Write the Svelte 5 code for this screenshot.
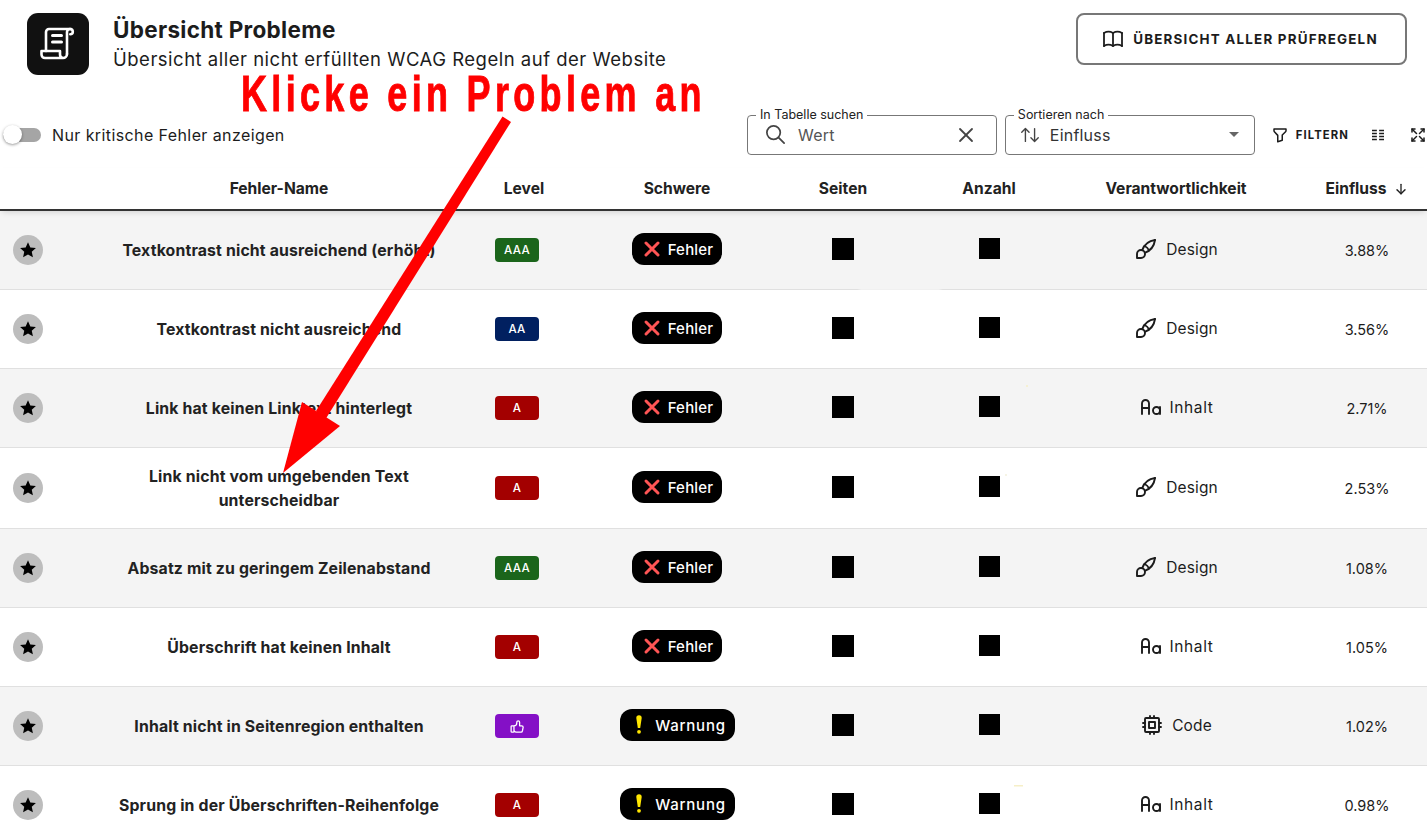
<script>
  const rows = [
    { name: ['Textkontrast nicht ausreichend (erhöht)'], level: 'AAA', sev: 'Fehler', who: 'Design', pct: '3.88%' },
    { name: ['Textkontrast nicht ausreichend'], level: 'AA', sev: 'Fehler', who: 'Design', pct: '3.56%' },
    { name: ['Link hat keinen Linktext hinterlegt'], level: 'A', sev: 'Fehler', who: 'Inhalt', pct: '2.71%' },
    { name: ['Link nicht vom umgebenden Text', 'unterscheidbar'], level: 'A', sev: 'Fehler', who: 'Design', pct: '2.53%' },
    { name: ['Absatz mit zu geringem Zeilenabstand'], level: 'AAA', sev: 'Fehler', who: 'Design', pct: '1.08%' },
    { name: ['Überschrift hat keinen Inhalt'], level: 'A', sev: 'Fehler', who: 'Inhalt', pct: '1.05%' },
    { name: ['Inhalt nicht in Seitenregion enthalten'], level: 'up', sev: 'Warnung', who: 'Code', pct: '1.02%' },
    { name: ['Sprung in der Überschriften-Reihenfolge'], level: 'A', sev: 'Warnung', who: 'Inhalt', pct: '0.98%' }
  ];
  const whoIcons = {
    Design: ['M3 21v-4a4 4 0 1 1 4 4h-4', 'M21 3a16 16 0 0 0 -12.8 10.2', 'M21 3a16 16 0 0 1 -10.2 12.8', 'M10.6 9a9 9 0 0 1 4.4 4.4'],
    Inhalt: ['M17.5 15.5m-3.5 0a3.5 3.5 0 1 0 7 0a3.5 3.5 0 1 0 -7 0', 'M3 19v-10.5a3.5 3.5 0 0 1 7 0v10.5', 'M3 13h7', 'M21 12v7'],
    Code: ['M5 6a1 1 0 0 1 1 -1h12a1 1 0 0 1 1 1v12a1 1 0 0 1 -1 1h-12a1 1 0 0 1 -1 -1z', 'M9 9h6v6h-6z', 'M3 10h2', 'M3 14h2', 'M10 3v2', 'M14 3v2', 'M21 10h-2', 'M21 14h-2', 'M14 21v-2', 'M10 21v-2']
  };
  const levelClass = { AAA: 'aaa', AA: 'aa', A: 'a', up: 'up' };
</script>

<div class="page">
  <header class="top">
    <div class="logo">
      <svg viewBox="0 0 62 62" width="62" height="62" fill="none" stroke="#fff" stroke-width="2.600" stroke-linecap="round" stroke-linejoin="round">
        <path d="M19 38V19a3 3 0 0 1 3-3h22" />
        <path d="M40 41V19a3 3 0 0 1 3-3 2.800 2.800 0 0 1 2.800 2.800 2.500 2.500 0 0 1-2.500 2.500" />
        <path d="M40 41a4 4 0 0 1-4 4H18a3.500 3.500 0 0 1-3.500-3.500V38H33v3.500a3.500 3.500 0 0 0 3 3.500" />
        <path d="M25.500 22.500h9M25.500 29h9" stroke-width="3" />
      </svg>
    </div>
    <div class="heading">
      <h1>Übersicht Probleme</h1>
      <p>Übersicht aller nicht erfüllten WCAG Regeln auf der Website</p>
    </div>
    <button class="rules">
      <svg viewBox="0 0 24 24" width="24" height="24" fill="none" stroke="#1c1c1c" stroke-width="1.800" stroke-linecap="round" stroke-linejoin="round">
        <path d="M3 19a9 9 0 0 1 9 0a9 9 0 0 1 9 0" /><path d="M3 6a9 9 0 0 1 9 0a9 9 0 0 1 9 0" /><path d="M3 6v13" /><path d="M12 6v13" /><path d="M21 6v13" />
      </svg>
      <span>ÜBERSICHT ALLER PRÜFREGELN</span>
    </button>
  </header>

  <div class="toolbar">
    <div class="toggle">
      <span class="track"><span class="thumb"></span></span>
      <span class="toggle-label">Nur kritische Fehler anzeigen</span>
    </div>
    <div class="tools">
      <fieldset class="field search">
        <legend>In Tabelle suchen</legend>
        <svg viewBox="0 0 24 24" width="23" height="23" fill="none" stroke="#444" stroke-width="1.800" stroke-linecap="round" stroke-linejoin="round"><path d="M3 10a7 7 0 1 0 14 0a7 7 0 1 0 -14 0" /><path d="M21 21l-6 -6" /></svg>
        <span class="value muted">Wert</span>
        <svg class="clear" viewBox="0 0 24 24" width="24" height="24" fill="none" stroke="#444" stroke-width="1.800" stroke-linecap="round"><path d="M18 6l-12 12" /><path d="M6 6l12 12" /></svg>
      </fieldset>
      <fieldset class="field sort">
        <legend>Sortieren nach</legend>
        <svg viewBox="0 0 24 24" width="22" height="22" fill="none" stroke="#444" stroke-width="1.500" stroke-linecap="round" stroke-linejoin="round"><path d="M3 9l4 -4l4 4m-4 -4v14" /><path d="M21 15l-4 4l-4 -4m4 4v-14" /></svg>
        <span class="value">Einfluss</span>
        <span class="caret"></span>
      </fieldset>
      <div class="filter">
        <svg viewBox="0 0 24 24" width="18" height="18" fill="none" stroke="#1c1c1c" stroke-width="2" stroke-linecap="round" stroke-linejoin="round"><path d="M4 4h16v2.172a2 2 0 0 1 -.586 1.414l-4.414 4.414v7l-6 2v-8.500l-4.480 -4.928a2 2 0 0 1 -.520 -1.345v-2.227z" /></svg>
        <span>FILTERN</span>
      </div>
      <svg class="cols" viewBox="0 0 24 24" width="18" height="18" fill="none" stroke="#1c1c1c" stroke-width="2.200"><path d="M4 6h6.500M4 10h6.500M4 14h6.500M4 18h6.500M13.500 6h6.500M13.500 10h6.500M13.500 14h6.500M13.500 18h6.500" /></svg>
      <svg class="full" viewBox="0 0 24 24" width="18" height="18" fill="none" stroke="#1c1c1c" stroke-width="2" stroke-linecap="round" stroke-linejoin="round"><path d="M16 4h4v4" /><path d="M14 10l6 -6" /><path d="M8 20h-4v-4" /><path d="M4 20l6 -6" /><path d="M16 20h4v-4" /><path d="M14 14l6 6" /><path d="M8 4h-4v4" /><path d="M4 4l6 6" /></svg>
    </div>
  </div>

  <div class="table">
    <div class="grid thead">
      <span></span>
      <span class="th name-th">Fehler-Name</span>
      <span class="th">Level</span>
      <span class="th">Schwere</span>
      <span class="th">Seiten</span>
      <span class="th">Anzahl</span>
      <span class="th">Verantwortlichkeit</span>
      <span class="th pct-col sort-th">Einfluss
        <svg viewBox="0 0 24 24" width="16" height="16" fill="none" stroke="#222" stroke-width="2" stroke-linecap="round" stroke-linejoin="round"><path d="M12 5v14" /><path d="M18 13l-6 6" /><path d="M6 13l6 6" /></svg>
      </span>
    </div>
    {#each rows as r, i}
      <div class="grid row" class:alt={i % 2 === 0} class:tall={r.name.length > 1}>
        <span class="star">
          <svg viewBox="0 0 24 24" width="20" height="20" fill="#000"><path d="M12 2.800l2.800 6.100 6.700.700-5 4.500 1.400 6.600L12 17.400l-5.900 3.300 1.400-6.600-5-4.500 6.700-.700z" /></svg>
        </span>
        <div class="name">
          {#each r.name as line}<div>{line}</div>{/each}
        </div>
        <span class="level {levelClass[r.level]}">
          {#if r.level === 'up'}
            <svg viewBox="0 0 24 24" width="17" height="17" fill="none" stroke="#fff" stroke-width="1.800" stroke-linecap="round" stroke-linejoin="round"><path d="M7 11v8a1 1 0 0 1 -1 1h-2a1 1 0 0 1 -1 -1v-7a1 1 0 0 1 1 -1h3a4 4 0 0 0 4 -4v-1a2 2 0 0 1 4 0v5h3a2 2 0 0 1 2 2l-1 5a2 3 0 0 1 -2 2h-7a3 3 0 0 1 -3 -3" /></svg>
          {:else}{r.level}{/if}
        </span>
        <span class="sev" class:warn={r.sev === 'Warnung'}>
          {#if r.sev === 'Fehler'}
            <svg viewBox="0 0 18 18" width="18" height="18" fill="none" stroke="#f55" stroke-width="3" stroke-linecap="round"><path d="M3 3l12 12M15 3L3 15" /></svg>
          {:else}
            <svg viewBox="0 0 10 20" width="10" height="20" fill="#ffe600"><path d="M2.300 3a2.700 2.700 0 0 1 5.400 0L6.200 13H3.800z" /><circle cx="5" cy="16.800" r="1.900" /></svg>
          {/if}
          <span>{r.sev}</span>
        </span>
        <span class="blur big"></span>
        <span class="blur"></span>
        <span class="who" class:inhalt={r.who === 'Inhalt'}>
          <svg viewBox="0 0 24 24" width="24" height="24" fill="none" stroke="#1c1c1c" stroke-width="1.900" stroke-linecap="round" stroke-linejoin="round">
            {#each whoIcons[r.who] as d}<path {d} />{/each}
          </svg>
          <span>{r.who}</span>
        </span>
        <span class="pct pct-col">{r.pct}</span>
      </div>
    {/each}
  </div>

  <div class="callout">Klicke ein Problem an</div>
  <svg class="arrow" viewBox="0 0 1427 839" width="1427" height="839">
    <polygon fill="#f00" points="502.500,116.500 511,122 325,420 316,411" />
    <polygon fill="#f00" points="302,402 340,426 283,473" />
    <path fill="#fff" d="M857 289.500h86c-20 3-66 3-86 0z" />
    <circle cx="1027" cy="386" r="1" fill="#f6efc8" />
    <circle cx="1006" cy="475" r="1" fill="#f3f0dc" />
    <rect x="1014" y="785" width="9" height="1.500" fill="#f6efc8" />
  </svg>
</div>

<style>
  :global(body) { margin: 0; background: #fff; }
  .page {
    position: relative;
    width: 1427px;
    height: 839px;
    overflow: hidden;
    font-family: Inter, "Open Sans", sans-serif;
    color: #1c1c1c;
  }
  .top {
    display: flex;
    align-items: flex-start;
    padding: 13px 20px 0 27px;
    height: 109px;
    box-sizing: border-box;
  }
  .logo {
    width: 62px;
    height: 62px;
    border-radius: 11px;
    background: #111;
    flex: none;
  }
  .logo svg { display: block; }
  .heading { margin-left: 24px; flex: 1; }
  h1 { margin: 3px 0 0; font-size: 22.500px; line-height: 28px; font-weight: 700; letter-spacing: .3px; }
  p { margin: 1px 0 0; font-size: 18.500px; line-height: 28px; font-weight: 400; letter-spacing: .5px; }
  .rules {
    width: 331px;
    height: 52px;
    border: 2px solid #777;
    border-radius: 8px;
    background: #fff;
    display: flex;
    align-items: center;
    justify-content: center;
    gap: 8px;
    font: 700 13.400px Inter, sans-serif;
    letter-spacing: 1.200px;
    color: #1c1c1c;
    padding: 0 4px 0 0;
  }
  .toolbar {
    display: flex;
    justify-content: space-between;
    align-items: flex-end;
    height: 46px;
  }
  .toggle { display: flex; align-items: center; height: 40px; padding-left: 3px; }
  .track { position: relative; display: block; width: 38px; height: 14px; border-radius: 7px; background: #a5a5a5; }
  .thumb {
    position: absolute; left: 0; top: -3px; width: 19px; height: 19px; border-radius: 50%;
    background: #fff; box-shadow: 0 1px 3px rgba(0,0,0,.4);
  }
  .toggle-label { margin-left: 11px; font-size: 16px; letter-spacing: .4px; }
  .tools { display: flex; align-items: flex-end; gap: 8px; position: relative; width: 680px; }
  .field {
    box-sizing: border-box;
    width: 250px;
    height: 46px;
    margin: 0;
    padding: 0 12px 6px 16px;
    border: 1px solid #777;
    border-radius: 4px;
    display: flex;
    align-items: center;
    min-width: 0;
  }
  legend { padding: 0 4px; margin-left: -8px; font-size: 12.500px; line-height: 12px; color: #222; }
  .value { font-size: 16px; margin-left: 11px; flex: 1; color: #333; letter-spacing: .2px; }
  .muted { color: #555; }
  .clear { margin-right: 6px; }
  .sort { padding-left: 13px; }
  .sort legend { margin-left: -5px; }
  .sort .value { margin-left: 9px; }
  .caret { width: 0; height: 0; border-left: 5px solid transparent; border-right: 5px solid transparent; border-top: 5px solid #666; margin-right: 3px; }
  .filter {
    display: flex; align-items: center; gap: 7px; height: 40px; margin-left: 8px;
    font-weight: 700; font-size: 11.300px; letter-spacing: 1.100px;
  }
  .cols, .full { height: 40px; flex: none; }
  .cols { margin-left: 12px; }
  .full { margin-left: 14px; }
  .table { margin-top: 13px; }
  .grid {
    display: grid;
    grid-template-columns: 58px 432px 68px 238px 94px 198px 176px 163px;
    align-items: center;
    justify-items: center;
    text-align: center;
  }
  .thead {
    height: 41px;
    border-bottom: 2px solid #333;
    box-shadow: 0 3px 6px -2px rgba(0,0,0,.15);
    position: relative;
  }
  .th { font-size: 15.600px; font-weight: 700; color: #222; }
  .name-th { padding-left: 10px; }
  .pct-col { padding-left: 43px; box-sizing: border-box; width: 100%; }
  .sort-th { display: flex; align-items: center; justify-content: center; gap: 6px; padding-left: 43px; white-space: nowrap; }
  .row { height: 78px; border-bottom: 1px solid #e0e0e0; background: #fff; }
  .row.tall { height: 80px; }
  .alt { background: #f4f4f4; }
  .star {
    width: 30px; height: 30px; border-radius: 50%; background: #bdbdbd;
    display: flex; align-items: center; justify-content: center;
    margin-right: 2px;
  }
  .name { font-size: 15.800px; line-height: 24px; font-weight: 700; color: #222; padding-left: 10px; margin-top: 2px; letter-spacing: .16px; }
  .level {
    width: 44px; height: 24px; border-radius: 4px; color: #fff; font-size: 11.600px; font-weight: 500;
    display: flex; align-items: center; justify-content: center; margin-right: 14px; letter-spacing: .3px;
  }
  .aaa { background: #1b651b; }
  .aa { background: #012060; }
  .a { background: #a30000; }
  .up { background: #8410c6; }
  .sev {
    box-sizing: border-box; padding-left: 2px;
    height: 32px; width: 90px; border-radius: 12px; background: #000; color: #fff;
    display: flex; align-items: center; justify-content: center; gap: 7px;
    font-size: 15px; font-weight: 500; margin-top: -2px; letter-spacing: .2px;
  }
  .sev.warn { width: 115px; gap: 11px; letter-spacing: .8px; padding-left: 6px; }
  .blur { width: 21px; height: 21px; background: #000; filter: blur(.7px); margin-top: -3px; }
  .blur.big { width: 22px; height: 22px; margin-top: -2px; }
  .who { display: flex; align-items: center; gap: 8px; font-size: 15.500px; font-weight: 400; margin-top: -2px; letter-spacing: .15px; }
  .who.inhalt { gap: 7px; letter-spacing: .6px; }
  .pct { font-size: 14.500px; font-weight: 400; margin-top: 1px; }
  .callout {
    position: absolute;
    left: 241px;
    top: 75px;
    font: 700 50px/38px "Liberation Sans", sans-serif;
    letter-spacing: 6px;
    color: #f00;
    -webkit-text-stroke: .9px #f00;
    white-space: nowrap;
    transform: scaleX(.72);
    transform-origin: left center;
  }
  .arrow { position: absolute; left: 0; top: 0; pointer-events: none; }
</style>
